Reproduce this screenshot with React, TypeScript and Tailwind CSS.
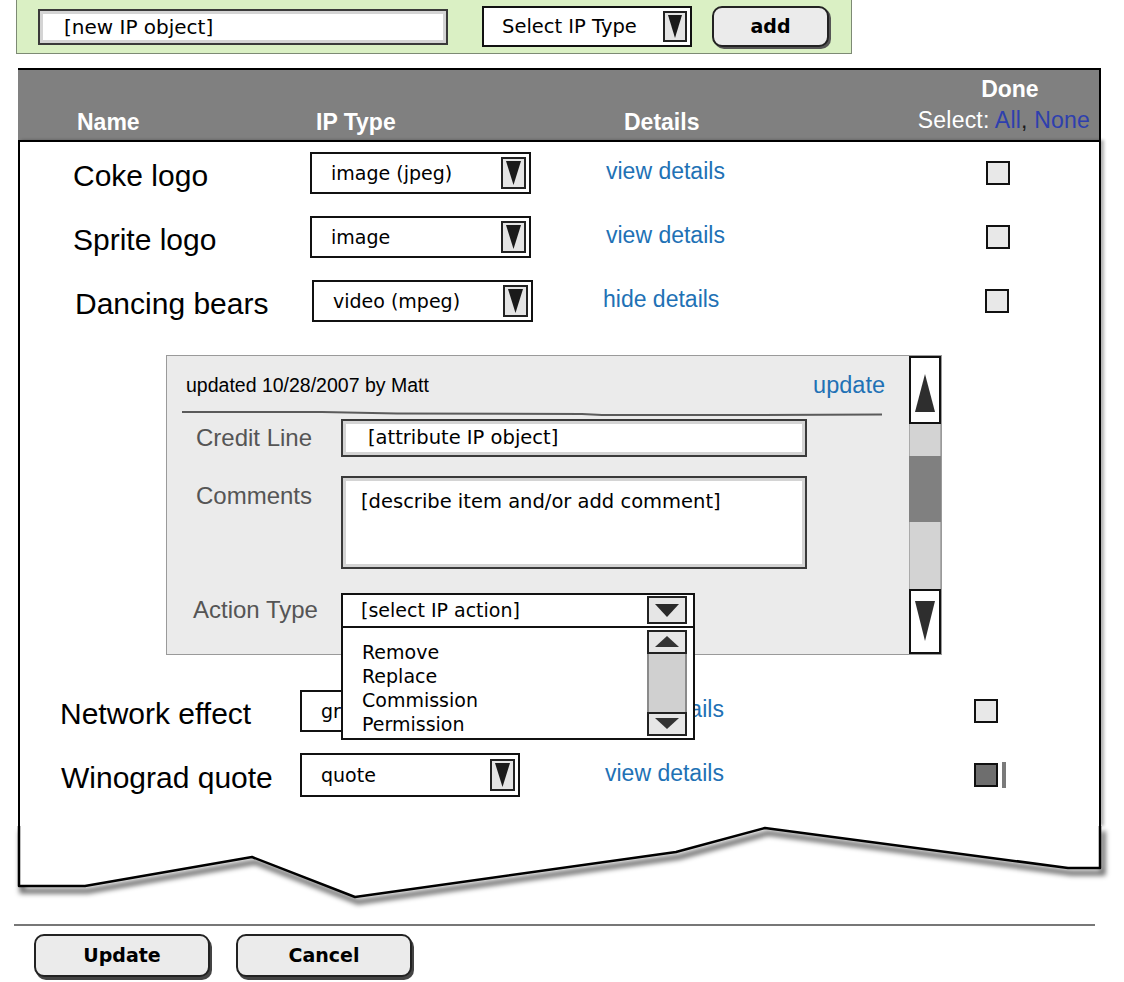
import clsx from "clsx";

const sans = "font-['Liberation_Sans',Arial,sans-serif]";
const dv = "font-['DejaVu_Sans',Verdana,sans-serif]";

function Tri({ w, h, up, fill = "#1a1a1a" }: { w: number; h: number; up?: boolean; fill?: string }) {
  const pts = up ? `${w / 2},0 ${w},${h} 0,${h}` : `0,0 ${w},0 ${w / 2},${h}`;
  return (
    <svg width={w} height={h} viewBox={`0 0 ${w} ${h}`}>
      <polygon points={pts} fill={fill} />
    </svg>
  );
}

function Select({ label, className }: { label: string; className?: string }) {
  return (
    <div className={clsx("flex items-center justify-between border-2 border-[#111] bg-white pl-[19px] pr-[3px]", className)}>
      <span className={clsx(dv, "text-[19px] text-black")}>{label}</span>
      <div className="flex h-[32px] w-[25px] items-center justify-center border-2 border-[#222] bg-[#e4e4e4]">
        <Tri w={15} h={24} />
      </div>
    </div>
  );
}

function Check({ filled }: { filled?: boolean }) {
  return (
    <div
      className={clsx(
        "h-[24px] w-[24px] border-2 border-[#111]",
        filled ? "bg-[#6e6e6e]" : "bg-[#e8e8e8]"
      )}
    />
  );
}

type RowProps = {
  name: string;
  type: string;
  link: string;
  nameCls: string;
  selCls: string;
  linkCls: string;
  rowCls: string;
  filled?: boolean;
};

function Row({ name, type, link, nameCls, selCls, linkCls, rowCls, filled }: RowProps) {
  return (
    <div className={clsx("flex items-center", rowCls)}>
      <span className={clsx(sans, "pt-[5px] text-[30px] leading-[34px] text-black", nameCls)}>{name}</span>
      <Select label={type} className={clsx("h-full", selCls)} />
      <span className={clsx(sans, "pb-[3px] text-[23px] text-[#2171b5]", linkCls)}>{link}</span>
      <Check filled={filled} />
      {filled && <div className="ml-[4px] h-[26px] w-[4px] bg-[#7a7a7a]" />}
    </div>
  );
}

function Input({ text, className, inner }: { text: string; className?: string; inner?: string }) {
  return (
    <div className={clsx("border-2 border-[#3a3a3a] bg-[#d4d4d4] p-[3px]", className)}>
      <div className={clsx("h-full bg-white text-black", dv, inner)}>{text}</div>
    </div>
  );
}

function DetailPanel() {
  return (
    <div className="ml-[146px] mt-[33px] flex h-[300px] w-[776px] border border-[#9a9a9a] bg-[#ebebeb]">
      <div className="flex-1">
        <div className="mt-[17px] flex h-[26px] items-center justify-between pl-[19px] pr-[24px]">
          <span className={clsx(sans, "text-[19.5px] text-black")}>updated 10/28/2007 by Matt</span>
          <span className={clsx(sans, "text-[23.5px] text-[#2171b5]")}>update</span>
        </div>
        <svg width="700" height="6" className="ml-[15px] mt-[11px] block">
          <polyline
            points="0,2 140,2 215,3.5 400,4 420,5 560,5 700,4.5"
            fill="none"
            stroke="#5a5a5a"
            strokeWidth="2"
          />
        </svg>
        <div className="mt-[3px] flex items-center pl-[29px]">
          <span className={clsx(sans, "w-[145px] text-[24px] text-[#555]")}>Credit Line</span>
          <Input
            text="[attribute IP object]"
            className="h-[38px] w-[466px]"
            inner="flex items-center pl-[22px] text-[19.5px]"
          />
        </div>
        <div className="mt-[19px] flex items-start pl-[29px]">
          <span className={clsx(sans, "mt-[2px] w-[145px] text-[24px] text-[#555]")}>Comments</span>
          <Input
            text="[describe item and/or add comment]"
            className="h-[93px] w-[466px]"
            inner="pl-[15px] pt-[6px] text-[19.5px]"
          />
        </div>
        <div className="mt-[23px] flex items-center pl-[26px]">
          <span className={clsx(sans, "w-[148px] text-[24px] text-[#555]")}>Action Type</span>
          <div className="relative h-[35px] w-[354px]">
            <div className="flex h-full items-center justify-between border-2 border-[#111] bg-white pl-[18px] pr-[6px]">
              <span className={clsx(dv, "text-[19px] text-black")}>[select IP action]</span>
              <div className="flex h-[28px] w-[40px] items-center justify-center border-2 border-[#222] bg-[#e6e6e6]">
                <Tri w={24} h={13} fill="#2a2a2a" />
              </div>
            </div>
            <div className="absolute left-0 top-full z-10 h-[112px] w-[354px] border-2 border-t-0 border-[#111] bg-white">
              <div className={clsx(dv, "pl-[19px] pt-[12px] text-[19px] leading-[24px] text-black")}>
                <div>Remove</div>
                <div>Replace</div>
                <div>Commission</div>
                <div>Permission</div>
              </div>
              <div className="absolute right-[6px] top-[2px] flex h-[106px] w-[40px] flex-col">
                <div className="flex h-[24px] items-center justify-center border-2 border-[#222] bg-[#e6e6e6]">
                  <Tri w={24} h={11} up fill="#333" />
                </div>
                <div className="flex-1 border-x-2 border-[#8a8a8a] bg-[#d0d0d0]" />
                <div className="flex h-[24px] items-center justify-center border-2 border-[#222] bg-[#e6e6e6]">
                  <Tri w={24} h={11} fill="#333" />
                </div>
              </div>
            </div>
          </div>
        </div>
      </div>
      <div className="flex w-[32px] flex-col">
        <div className="flex h-[68px] items-start justify-center border-2 border-[#111] bg-white pt-[16px]">
          <Tri w={20} h={38} up fill="#2e2e2e" />
        </div>
        <div className="h-[32px] border-x border-[#aaa] bg-[#d3d3d3]" />
        <div className="h-[66px] bg-[#808080]" />
        <div className="h-[67px] border-x border-[#aaa] bg-[#d3d3d3]" />
        <div className="flex h-[65px] items-start justify-center border-2 border-[#111] bg-white pt-[10px]">
          <Tri w={20} h={40} fill="#2e2e2e" />
        </div>
      </div>
    </div>
  );
}

export default function App() {
  const edge = "M1 0 L1 60 L67 60 L234 31 L337 71 L658 26 L747 2 L1050 42 L1082 42 L1082 0";
  const btn = clsx(
    dv,
    "h-[43px] w-[176px] rounded-[10px] border-2 border-[#222] bg-[#ebebeb] text-[19px] font-bold text-black shadow-[2px_3px_0_#444]"
  );
  return (
    <div className="h-[982px] w-[1124px] overflow-hidden bg-white">
      {/* add bar */}
      <div className="ml-[16px] flex h-[54px] w-[836px] items-center border-x border-b border-[#7d8a74] bg-[#daf0c4]">
        <Input
          text="[new IP object]"
          className="ml-[21px] h-[36px] w-[410px]"
          inner="flex items-center pl-[21px] text-[20px]"
        />
        <div className="ml-[34px] flex h-[41px] w-[210px] items-center justify-between border-2 border-[#111] bg-white pl-[18px] pr-[3px]">
          <span className={clsx(dv, "text-[19.5px] text-black")}>Select IP Type</span>
          <div className="flex h-[31px] w-[24px] items-center justify-center border-2 border-[#222] bg-[#e4e4e4]">
            <Tri w={14} h={23} />
          </div>
        </div>
        <button className={clsx(dv, "ml-[20px] h-[41px] w-[117px] rounded-[10px] border-2 border-[#222] bg-[#ebebeb] text-[19px] font-bold text-black shadow-[2px_2px_0_#555]")}>
          add
        </button>
      </div>

      {/* list frame */}
      <div className="ml-[18px] mt-[14px] w-[1083px]">
        <div className={clsx(sans, "flex h-[72px] border-t-2 border-r-2 border-black bg-[#808080] text-white")}>
          <div className="flex items-end pb-[1px] text-[23px] font-bold">
            <span className="ml-[59px] w-[239px]">Name</span>
            <span className="w-[308px]">IP Type</span>
            <span>Details</span>
          </div>
          <div className="ml-auto flex flex-col items-center pr-[9px] pt-[6px] text-[23px] leading-[26px]">
            <span className="ml-[12px] font-bold">Done</span>
            <span className="mt-[5px] tracking-[0.2px]">
              Select: <span className="text-[#2e3fae]">All</span>
              <span className="text-[#1a1a1a]">,</span> <span className="text-[#2e3fae]">None</span>
            </span>
          </div>
        </div>

        <div className="h-[686px] border-x-2 border-t-2 border-black bg-white pt-[10px] shadow-[3px_0_3px_rgba(0,0,0,0.3)]">
          <Row
            name="Coke logo"
            type="image (jpeg)"
            link="view details"
            rowCls="h-[42px]"
            nameCls="ml-[53px] w-[237px]"
            selCls="w-[221px]"
            linkCls="ml-[75px] w-[380px]"
          />
          <Row
            name="Sprite logo"
            type="image"
            link="view details"
            rowCls="mt-[22px] h-[42px]"
            nameCls="ml-[53px] w-[237px]"
            selCls="w-[221px]"
            linkCls="ml-[75px] w-[380px]"
          />
          <Row
            name="Dancing bears"
            type="video (mpeg)"
            link="hide details"
            rowCls="mt-[22px] h-[42px]"
            nameCls="ml-[55px] w-[237px]"
            selCls="w-[221px]"
            linkCls="ml-[70px] w-[382px]"
          />
          <DetailPanel />
          <Row
            name="Network effect"
            type="graphic"
            link="view details"
            rowCls="mt-[35px] h-[42px]"
            nameCls="ml-[40px] w-[240px]"
            selCls="w-[220px]"
            linkCls="ml-[85px] w-[369px]"
          />
          <Row
            name="Winograd quote"
            type="quote"
            link="view details"
            rowCls="mt-[21px] h-[44px]"
            nameCls="ml-[41px] w-[239px]"
            selCls="w-[220px]"
            linkCls="ml-[85px] w-[369px]"
            filled
          />
        </div>

        <svg width="1083" height="80" className="block overflow-visible">
          <defs>
            <filter id="blur" x="-5%" y="-50%" width="110%" height="200%">
              <feGaussianBlur stdDeviation="2.5" />
            </filter>
          </defs>
          <path d={edge} transform="translate(3 5)" fill="none" stroke="#000" strokeOpacity="0.6" strokeWidth="5" filter="url(#blur)" />
          <path d={edge + " Z"} fill="#fff" stroke="none" />
          <path d={edge} fill="none" stroke="#000" strokeWidth="2.5" strokeLinejoin="round" />
        </svg>
      </div>

      <div className="ml-[14px] mt-[18px] h-[2px] w-[1081px] bg-[#777]" />
      <div className="ml-[34px] mt-[8px] flex gap-[26px]">
        <button className={btn}>Update</button>
        <button className={btn}>Cancel</button>
      </div>
    </div>
  );
}
